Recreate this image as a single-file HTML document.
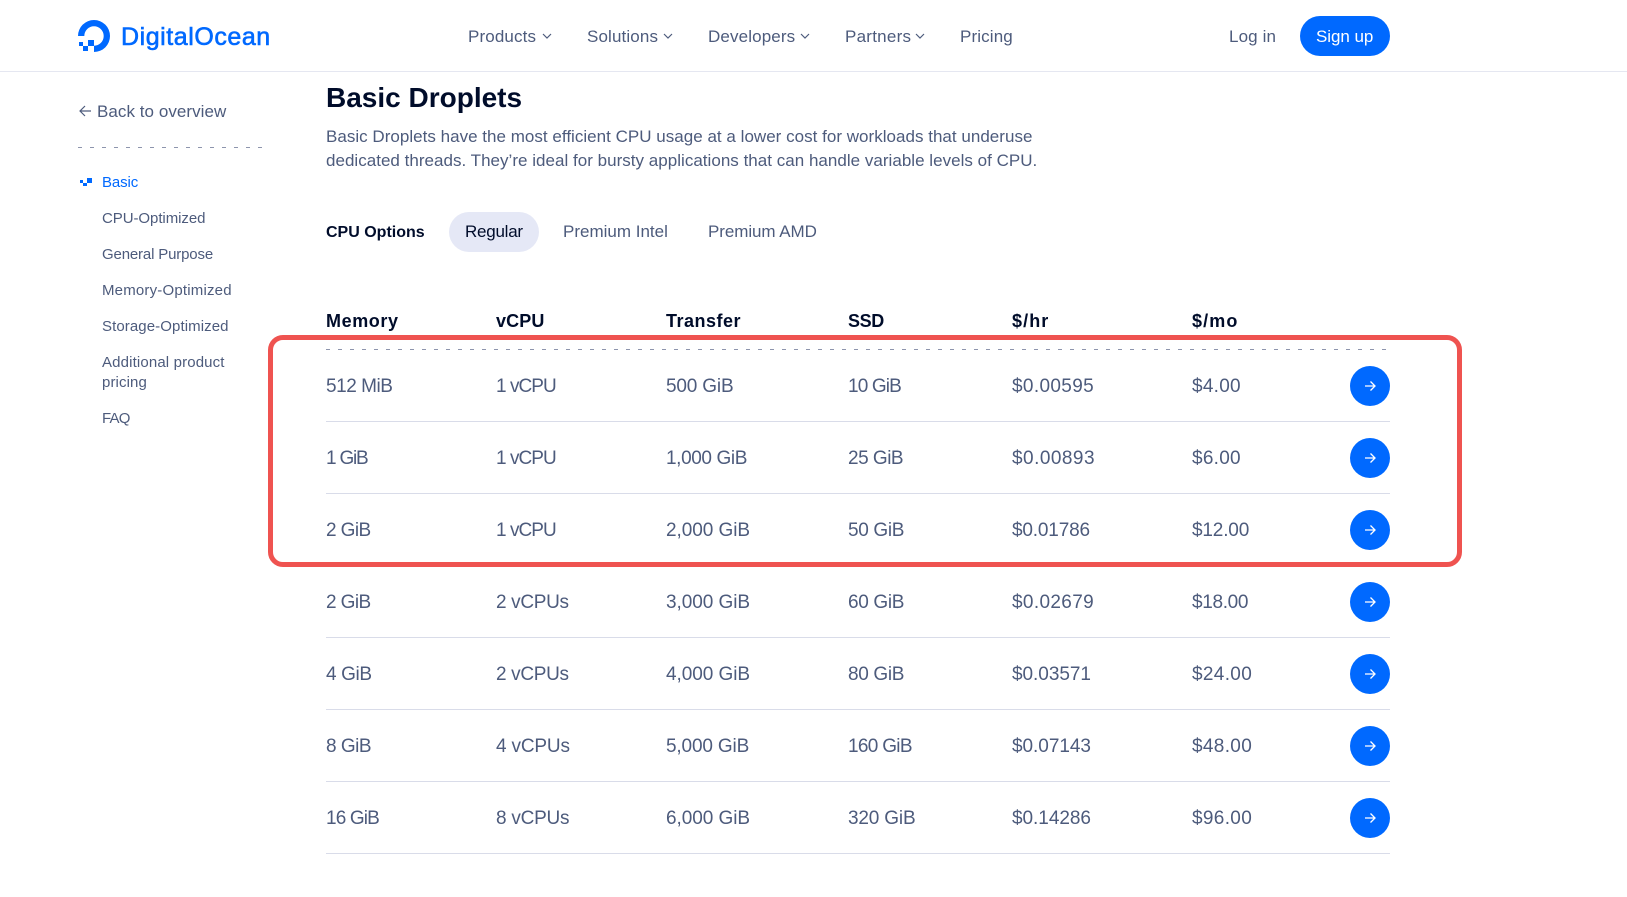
<!DOCTYPE html>
<html lang="en">
<head>
<meta charset="utf-8">
<title>Basic Droplets</title>
<style>
html,body{margin:0;padding:0;background:#fff}
body{position:relative;width:1627px;height:897px;overflow:hidden;font-family:"Liberation Sans",sans-serif;color:#4d5b7c}
.t{position:absolute;white-space:nowrap;line-height:24px;height:24px}
.n{font-size:17px;letter-spacing:.13px;top:25px}
.s{font-size:15px;letter-spacing:0;margin-top:2px}
.h{font-size:18px;font-weight:700;color:#000c2a;top:309px}
.c{font-size:19px;margin-top:2px}
.o{font-size:17px;top:220px}
.line{position:absolute;left:326px;width:1064px;height:1px;background:#d9dce9}
.b{position:absolute;left:1350px;width:40px;height:40px;border-radius:50%;background:#0069ff}
.b svg{position:absolute;left:12px;top:12px}
.abs{position:absolute}
</style>
</head>
<body>
<div class="abs" style="left:0;top:71px;width:1627px;height:1px;background:#e5e7f1"></div>

<svg class="abs" style="left:78px;top:20px" width="33" height="33" viewBox="78 20 33 33"><path fill="#0069ff" d="M94 52v-6.300a9.700 9.700 0 1 0-9.700-9.700H78a16 16 0 1 1 16 16z"/><path fill="#0069ff" d="M88 40h6v6h-6zM83 46h5v5h-5zM79 42h4v4h-4z"/></svg>
<div class="t" style="left:121px;top:25px;font-size:25px;color:#0069ff;letter-spacing:.55px;-webkit-text-stroke:.6px #0069ff">DigitalOcean</div>

<div class="t n" style="left:468px">Products</div>
<svg class="abs" style="left:542px;top:33px" width="10" height="7" viewBox="0 0 10 7"><path d="M1 1l4 4 4-4" fill="none" stroke="#4d5b7c" stroke-width="1.200"/></svg>
<div class="t n" style="left:587px">Solutions</div>
<svg class="abs" style="left:663px;top:33px" width="10" height="7" viewBox="0 0 10 7"><path d="M1 1l4 4 4-4" fill="none" stroke="#4d5b7c" stroke-width="1.200"/></svg>
<div class="t n" style="left:708px">Developers</div>
<svg class="abs" style="left:800px;top:33px" width="10" height="7" viewBox="0 0 10 7"><path d="M1 1l4 4 4-4" fill="none" stroke="#4d5b7c" stroke-width="1.200"/></svg>
<div class="t n" style="left:845px;letter-spacing:.25px">Partners</div>
<svg class="abs" style="left:915px;top:33px" width="10" height="7" viewBox="0 0 10 7"><path d="M1 1l4 4 4-4" fill="none" stroke="#4d5b7c" stroke-width="1.200"/></svg>
<div class="t n" style="left:960px">Pricing</div>
<div class="t n" style="left:1229px">Log in</div>
<div class="abs" style="left:1300px;top:16px;width:90px;height:40px;border-radius:20px;background:#0069ff"></div>
<div class="t n" style="left:1316px;color:#fff;letter-spacing:-.05px">Sign up</div>

<svg class="abs" style="left:78px;top:103px" width="14" height="16" viewBox="0 0 14 16"><path d="M13 8H2M7 3L2 8l5 5" fill="none" stroke="#4d5b7c" stroke-width="1.200"/></svg>
<div class="t" style="left:97px;top:100px;font-size:17px;letter-spacing:.05px">Back to overview</div>
<svg class="abs" style="left:78px;top:147px" width="184" height="1"><line x1="0" y1=".5" x2="184" y2=".5" stroke="#8d95ad" stroke-width="1" stroke-dasharray="4 8"/></svg>
<svg class="abs" style="left:79px;top:176px" width="14" height="11" viewBox="0 0 14 11"><path fill="#0069ff" d="M8 2h5v5H8zM4 7h4v3H4zM1 4h3v3H1z"/></svg>
<div class="t s" style="left:102px;top:169px;color:#0069ff;letter-spacing:-.1px">Basic</div>
<div class="t s" style="left:102px;top:205px;letter-spacing:-.06px">CPU-Optimized</div>
<div class="t s" style="left:102px;top:241px;letter-spacing:-.16px">General Purpose</div>
<div class="t s" style="left:102px;top:277px;letter-spacing:.19px">Memory-Optimized</div>
<div class="t s" style="left:102px;top:313px;letter-spacing:.09px">Storage-Optimized</div>
<div class="t s" style="left:102px;top:349px;letter-spacing:.14px">Additional product</div>
<div class="t s" style="left:102px;top:369px;letter-spacing:.1px">pricing</div>
<div class="t s" style="left:102px;top:405px;letter-spacing:-.8px">FAQ</div>

<div class="t" style="left:326px;top:80px;height:36px;line-height:36px;font-size:28px;font-weight:700;color:#000c2a">Basic Droplets</div>
<div class="t" style="left:326px;top:125px;font-size:17px;letter-spacing:.02px">Basic Droplets have the most efficient CPU usage at a lower cost for workloads that underuse</div>
<div class="t" style="left:326px;top:149px;font-size:17px;letter-spacing:.02px">dedicated threads. They’re ideal for bursty applications that can handle variable levels of CPU.</div>

<div class="t" style="left:326px;top:221px;font-size:16px;font-weight:700;color:#000c2a">CPU Options</div>
<div class="abs" style="left:449px;top:212px;width:90px;height:40px;border-radius:20px;background:#e5e8f6"></div>
<div class="t o" style="left:465px;color:#000c2a;letter-spacing:-.24px">Regular</div>
<div class="t o" style="left:563px">Premium Intel</div>
<div class="t o" style="left:708px;letter-spacing:-.07px">Premium AMD</div>

<div class="t h" style="left:326px;letter-spacing:.6px">Memory</div>
<div class="t h" style="left:496px;letter-spacing:.1px">vCPU</div>
<div class="t h" style="left:666px;letter-spacing:.5px">Transfer</div>
<div class="t h" style="left:848px;letter-spacing:-.35px">SSD</div>
<div class="t h" style="left:1012px;letter-spacing:1.1px">$/hr</div>
<div class="t h" style="left:1192px;letter-spacing:1.1px">$/mo</div>
<svg class="abs" style="left:326px;top:349px" width="1064" height="1"><line x1="0" y1=".5" x2="1064" y2=".5" stroke="#8d95ad" stroke-width="1" stroke-dasharray="4 8"/></svg>

<div class="t c" style="left:326px;top:373px;letter-spacing:-.47px">512 MiB</div><div class="t c" style="left:496px;top:373px;letter-spacing:-.95px">1 vCPU</div><div class="t c" style="left:666px;top:373px;letter-spacing:-.17px">500 GiB</div><div class="t c" style="left:848px;top:373px;letter-spacing:-.85px">10 GiB</div><div class="t c" style="left:1012px;top:373px;letter-spacing:.35px">$0.00595</div><div class="t c" style="left:1192px;top:373px;letter-spacing:.26px">$4.00</div>
<div class="b" style="top:366px"><svg width="16" height="16" viewBox="0 0 16 16"><path d="M3 8h10M8.500 3.500L13 8l-4.500 4.500" fill="none" stroke="#fff" stroke-width="1.300"/></svg></div>
<div class="line" style="top:421px"></div>

<div class="t c" style="left:326px;top:445px;letter-spacing:-1.2px">1 GiB</div><div class="t c" style="left:496px;top:445px;letter-spacing:-.95px">1 vCPU</div><div class="t c" style="left:666px;top:445px;letter-spacing:-.39px">1,000 GiB</div><div class="t c" style="left:848px;top:445px;letter-spacing:-.5px">25 GiB</div><div class="t c" style="left:1012px;top:445px;letter-spacing:.47px">$0.00893</div><div class="t c" style="left:1192px;top:445px;letter-spacing:.26px">$6.00</div>
<div class="b" style="top:438px"><svg width="16" height="16" viewBox="0 0 16 16"><path d="M3 8h10M8.500 3.500L13 8l-4.500 4.500" fill="none" stroke="#fff" stroke-width="1.300"/></svg></div>
<div class="line" style="top:493px"></div>

<div class="t c" style="left:326px;top:517px;letter-spacing:-.58px">2 GiB</div><div class="t c" style="left:496px;top:517px;letter-spacing:-.95px">1 vCPU</div><div class="t c" style="left:666px;top:517px;letter-spacing:-.05px">2,000 GiB</div><div class="t c" style="left:848px;top:517px;letter-spacing:-.33px">50 GiB</div><div class="t c" style="left:1012px;top:517px;letter-spacing:-.17px">$0.01786</div><div class="t c" style="left:1192px;top:517px;letter-spacing:-.17px">$12.00</div>
<div class="b" style="top:510px"><svg width="16" height="16" viewBox="0 0 16 16"><path d="M3 8h10M8.500 3.500L13 8l-4.500 4.500" fill="none" stroke="#fff" stroke-width="1.300"/></svg></div>
<div class="line" style="top:565px"></div>

<div class="t c" style="left:326px;top:589px;letter-spacing:-.58px">2 GiB</div><div class="t c" style="left:496px;top:589px;letter-spacing:-.33px">2 vCPUs</div><div class="t c" style="left:666px;top:589px;letter-spacing:-.05px">3,000 GiB</div><div class="t c" style="left:848px;top:589px;letter-spacing:-.33px">60 GiB</div><div class="t c" style="left:1012px;top:589px;letter-spacing:.35px">$0.02679</div><div class="t c" style="left:1192px;top:589px;letter-spacing:-.33px">$18.00</div>
<div class="b" style="top:582px"><svg width="16" height="16" viewBox="0 0 16 16"><path d="M3 8h10M8.500 3.500L13 8l-4.500 4.500" fill="none" stroke="#fff" stroke-width="1.300"/></svg></div>
<div class="line" style="top:637px"></div>

<div class="t c" style="left:326px;top:661px;letter-spacing:-.38px">4 GiB</div><div class="t c" style="left:496px;top:661px;letter-spacing:-.33px">2 vCPUs</div><div class="t c" style="left:666px;top:661px;letter-spacing:-.05px">4,000 GiB</div><div class="t c" style="left:848px;top:661px;letter-spacing:-.33px">80 GiB</div><div class="t c" style="left:1012px;top:661px;letter-spacing:-.04px">$0.03571</div><div class="t c" style="left:1192px;top:661px;letter-spacing:.33px">$24.00</div>
<div class="b" style="top:654px"><svg width="16" height="16" viewBox="0 0 16 16"><path d="M3 8h10M8.500 3.500L13 8l-4.500 4.500" fill="none" stroke="#fff" stroke-width="1.300"/></svg></div>
<div class="line" style="top:709px"></div>

<div class="t c" style="left:326px;top:733px;letter-spacing:-.5px">8 GiB</div><div class="t c" style="left:496px;top:733px;letter-spacing:-.17px">4 vCPUs</div><div class="t c" style="left:666px;top:733px;letter-spacing:-.15px">5,000 GiB</div><div class="t c" style="left:848px;top:733px;letter-spacing:-.69px">160 GiB</div><div class="t c" style="left:1012px;top:733px;letter-spacing:-.04px">$0.07143</div><div class="t c" style="left:1192px;top:733px;letter-spacing:.33px">$48.00</div>
<div class="b" style="top:726px"><svg width="16" height="16" viewBox="0 0 16 16"><path d="M3 8h10M8.500 3.500L13 8l-4.500 4.500" fill="none" stroke="#fff" stroke-width="1.300"/></svg></div>
<div class="line" style="top:781px"></div>

<div class="t c" style="left:326px;top:805px;letter-spacing:-.85px">16 GiB</div><div class="t c" style="left:496px;top:805px;letter-spacing:-.25px">8 vCPUs</div><div class="t c" style="left:666px;top:805px;letter-spacing:-.05px">6,000 GiB</div><div class="t c" style="left:848px;top:805px;letter-spacing:-.17px">320 GiB</div><div class="t c" style="left:1012px;top:805px;letter-spacing:-.04px">$0.14286</div><div class="t c" style="left:1192px;top:805px;letter-spacing:.33px">$96.00</div>
<div class="b" style="top:798px"><svg width="16" height="16" viewBox="0 0 16 16"><path d="M3 8h10M8.500 3.500L13 8l-4.500 4.500" fill="none" stroke="#fff" stroke-width="1.300"/></svg></div>
<div class="line" style="top:853px"></div>

<div class="abs" style="left:268px;top:335px;width:1194px;height:232px;box-sizing:border-box;border:5px solid #ef5350;border-radius:15px"></div>
</body>
</html>
